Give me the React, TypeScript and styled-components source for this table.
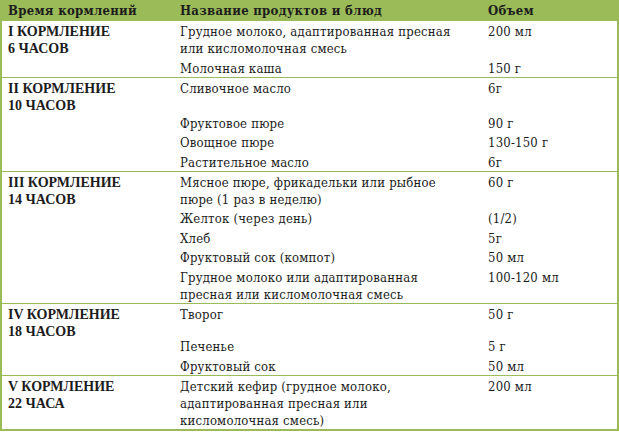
import React from 'react'
import styled, { createGlobalStyle } from 'styled-components'

const GREEN = '#9bbb59'

const GlobalStyle = createGlobalStyle`
  html, body {
    margin: 0;
    padding: 0;
    background: #fff;
  }
  body {
    font-family: "DejaVu Serif", "Liberation Serif", serif;
    font-stretch: condensed;
    font-size: 13px;
    letter-spacing: 0.2px;
    color: #1c1c1c;
  }
`

const Table = styled.div`
  width: 619px;
  display: flex;
  flex-direction: column;
`

const HeaderRow = styled.div`
  display: grid;
  grid-template-columns: 172px 308px 1fr;
  height: 21px;
  align-items: center;
  background: ${GREEN};
  font-weight: bold;
  letter-spacing: 0.3px;
`

const HeaderCell = styled.div`
  padding-left: 8px;
`

const Row = styled.div<{ last?: boolean }>`
  display: flex;
  border-left: 2px solid ${GREEN};
  border-right: 2px solid ${GREEN};
  border-bottom: ${({ last }) => (last ? 2 : 1)}px solid ${GREEN};
  padding-top: 2px;
`

const TitleCell = styled.div`
  width: 170px;
  padding-left: 6px;
  box-sizing: border-box;
  font-family: "Liberation Serif", serif;
  font-stretch: normal;
  font-size: 14px;
  font-weight: bold;
  letter-spacing: 0;
  line-height: 17px;
`

const Items = styled.div`
  flex: 1;
  display: flex;
  flex-direction: column;
  gap: 2.5px;
`

const Item = styled.div<{ gapBefore?: number }>`
  display: grid;
  grid-template-columns: 308px 1fr;
  line-height: 17px;
  margin-top: ${({ gapBefore }) => gapBefore ?? 0}px;
`

const Name = styled.div`
  padding-left: 8px;
`

const Volume = styled.div`
  padding-left: 8px;
`

type Product = { lines: string[]; vol: string; gapBefore?: number }
type Feeding = { title: string[]; items: Product[] }

const feedings: Feeding[] = [
  {
    title: ['I КОРМЛЕНИЕ', '6 ЧАСОВ'],
    items: [
      { lines: ['Грудное молоко, адаптированная пресная', 'или кисломолочная смесь'], vol: '200 мл' },
      { lines: ['Молочная каша'], vol: '150 г' },
    ],
  },
  {
    title: ['II КОРМЛЕНИЕ', '10 ЧАСОВ'],
    items: [
      { lines: ['Сливочное масло'], vol: '6г' },
      { lines: ['Фруктовое пюре'], vol: '90 г', gapBefore: 15.5 },
      { lines: ['Овощное пюре'], vol: '130-150 г' },
      { lines: ['Растительное масло'], vol: '6г' },
    ],
  },
  {
    title: ['III КОРМЛЕНИЕ', '14 ЧАСОВ'],
    items: [
      { lines: ['Мясное пюре, фрикадельки или рыбное', 'пюре (1 раз в неделю)'], vol: '60 г' },
      { lines: ['Желток (через день)'], vol: '(1/2)' },
      { lines: ['Хлеб'], vol: '5г' },
      { lines: ['Фруктовый сок (компот)'], vol: '50 мл' },
      { lines: ['Грудное молоко или адаптированная', 'пресная или кисломолочная смесь'], vol: '100-120 мл' },
    ],
  },
  {
    title: ['IV КОРМЛЕНИЕ', '18 ЧАСОВ'],
    items: [
      { lines: ['Творог'], vol: '50 г' },
      { lines: ['Печенье'], vol: '5 г', gapBefore: 13 },
      { lines: ['Фруктовый сок'], vol: '50 мл' },
    ],
  },
  {
    title: ['V КОРМЛЕНИЕ', '22 ЧАСА'],
    items: [
      {
        lines: ['Детский кефир (грудное молоко,', 'адаптированная пресная или', 'кисломолочная смесь)'],
        vol: '200 мл',
      },
    ],
  },
]

function Lines({ lines }: { lines: string[] }) {
  return (
    <>
      {lines.map((line, i) => (
        <div key={i}>{line}</div>
      ))}
    </>
  )
}

export default function App() {
  return (
    <>
      <GlobalStyle />
      <Table>
        <HeaderRow>
          <HeaderCell>Время кормлений</HeaderCell>
          <HeaderCell>Название продуктов и блюд</HeaderCell>
          <HeaderCell>Объем</HeaderCell>
        </HeaderRow>

        {feedings.map((feeding, i) => (
          <Row key={i} last={i === feedings.length - 1}>
            <TitleCell>
              <Lines lines={feeding.title} />
            </TitleCell>
            <Items>
              {feeding.items.map((item, j) => (
                <Item key={j} gapBefore={item.gapBefore}>
                  <Name>
                    <Lines lines={item.lines} />
                  </Name>
                  <Volume>{item.vol}</Volume>
                </Item>
              ))}
            </Items>
          </Row>
        ))}
      </Table>
    </>
  )
}
